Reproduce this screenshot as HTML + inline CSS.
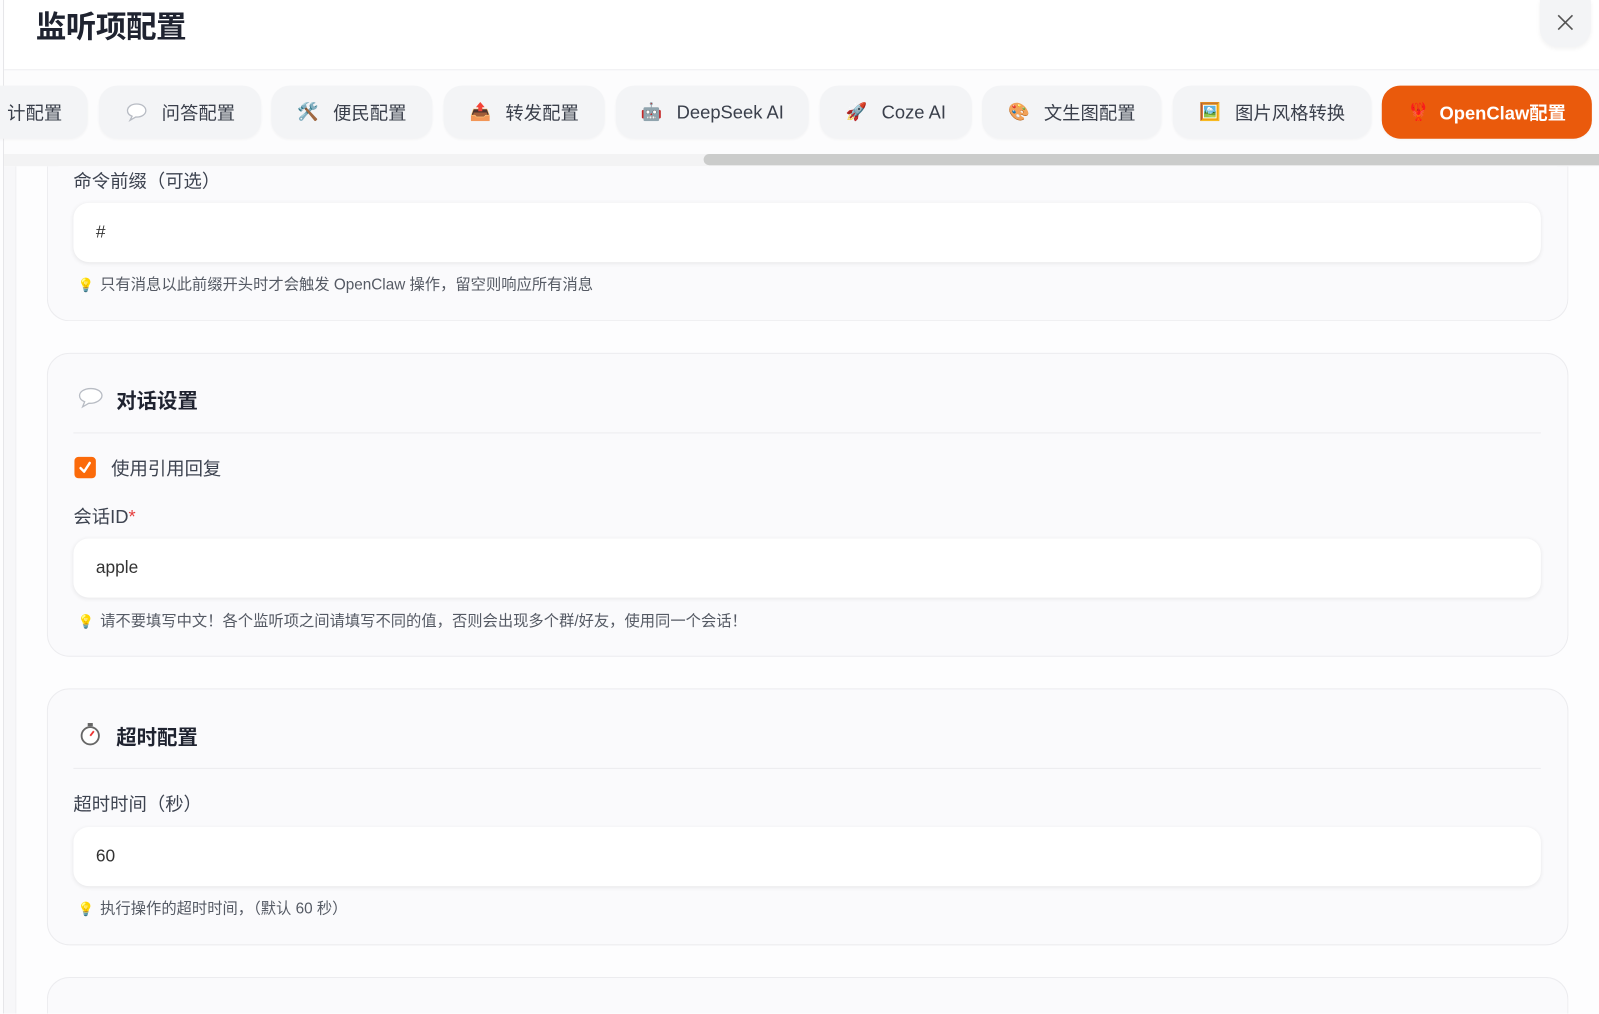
<!DOCTYPE html>
<html style="overflow:hidden"><head><meta charset="utf-8">
<style>
*{box-sizing:border-box;margin:0;padding:0}
html,body{width:1599px;height:1014px;overflow:hidden}
body{background:#fdfdfe;font-family:"Liberation Sans","Noto Sans CJK SC",sans-serif;color:#333;position:relative}
#wrap{position:absolute;left:0;top:0;width:1568px;height:994px;transform:scale(1.01977);transform-origin:0 0;overflow:hidden}
.abs{position:absolute}
.leftline{left:3px;top:0;width:1px;height:994px;background:#e5e5e8}
.leftband{left:4px;top:163px;width:12px;height:831px;background:#f7f7f9;border-right:1px solid #efeff2}
.header{left:4px;top:0;width:1564px;height:69px;background:#fff;border-bottom:1px solid #ececef}
.title{left:35px;top:2px;font-size:30px;font-weight:bold;color:#1f2330;letter-spacing:-0.5px}
.close{left:1510px;top:0;width:50px;height:46px;border-radius:0 0 18px 18px;background:#f3f4f6;box-shadow:0 2px 4px rgba(0,0,0,.05)}
.tabsbg{left:4px;top:69px;width:1564px;height:94px;background:#fcfcfd}
.tab{position:absolute;top:84px;height:52px;border-radius:18px;background:#f3f4f6;font-size:18px;color:#3a3f4b;display:flex;align-items:center;justify-content:center;gap:14px;box-shadow:0 1px 2px rgba(0,0,0,.03)}
.tab .ic{font-size:17px}
.tab.active{background:#ea5a0c;color:#fff;font-weight:bold}
.track{left:4px;top:151px;width:1564px;height:12px;background:#f3f3f4}
.thumb{left:690px;top:151px;width:878px;height:11px;background:#cbcccb;border-radius:6px 0 0 6px}
.card{position:absolute;left:46px;width:1492px;background:#fafafc;border:1px solid #ececef;border-radius:22px}
.lbl{position:absolute;left:72px;font-size:18px;color:#3d4350}
.inp{position:absolute;left:72px;width:1439px;height:58px;background:#fff;border-radius:15px;box-shadow:0 1px 4px rgba(0,0,0,.08);font-size:17px;color:#333;padding-left:22px;line-height:58px}
.hint{position:absolute;left:76px;font-size:15px;color:#555a64}
.hint b{font-weight:normal;font-size:13px;margin-right:6px}
.ctitle{position:absolute;left:114px;font-size:20px;font-weight:bold;color:#1f2330}
.divider{position:absolute;left:72px;width:1439px;height:1px;background:#ececef}
</style></head><body><div id="wrap">
<div class="abs leftline"></div>
<div class="abs leftband"></div>
<div class="abs header"></div>
<div class="abs title">监听项配置</div>
<div class="abs close"><svg width="50" height="46"><path d="M18 15 L32 29 M32 15 L18 29" stroke="#555" stroke-width="1.6" fill="none"/></svg></div>
<div class="abs tabsbg"></div>
<div class="tab" style="left:-70px;width:156px;justify-content:flex-end;padding-right:25px">计配置</div>
<div class="tab" style="left:97px;width:159px"><svg width="22" height="20"><path d="M11 2 C5 2 2 5.5 2 8.5 C2 11 4 13 6.5 14 L4.5 18 L10 14.8 C16 15 20 12 20 8.5 C20 5 16.5 2 11 2 Z" fill="#fff" stroke="#b8bcc4" stroke-width="1.3"/></svg>问答配置</div>
<div class="tab" style="left:266px;width:158px"><span class="ic">🛠️</span>便民配置</div>
<div class="tab" style="left:435px;width:158px"><span class="ic">📤</span>转发配置</div>
<div class="tab" style="left:604px;width:189px"><span class="ic">🤖</span>DeepSeek AI</div>
<div class="tab" style="left:804px;width:149px"><span class="ic">🚀</span>Coze AI</div>
<div class="tab" style="left:963px;width:176px"><span class="ic">🎨</span>文生图配置</div>
<div class="tab" style="left:1150px;width:195px"><span class="ic">🖼️</span>图片风格转换</div>
<div class="tab active" style="left:1355px;width:206px;gap:10px"><span class="ic">🦞</span>OpenClaw配置</div>
<div class="abs track"></div>
<div class="abs thumb"></div>

<div class="card" style="border-top:none;border-radius:0 0 22px 22px;top:163px;height:152px"></div>
<div class="lbl" style="top:164px">命令前缀（可选）</div>
<div class="inp" style="top:199px">#</div>
<div class="hint" style="top:268px"><b>💡</b>只有消息以此前缀开头时才会触发 OpenClaw 操作，留空则响应所有消息</div>

<div class="card" style="top:346px;height:298px"></div>
<div class="abs" style="left:76px;top:379px"><svg width="26" height="22"><path d="M13 2 C6 2 2 5.5 2 9 C2 12 4.5 14 7 15 L5 20 L11 16.5 C18 16.8 24 13 24 9 C24 5 19.5 2 13 2 Z" fill="#fff" stroke="#b8bcc4" stroke-width="1.3"/></svg></div>
<div class="ctitle" style="top:377px">对话设置</div>
<div class="divider" style="top:424px"></div>
<div class="abs" style="left:73px;top:448px;width:21px;height:21px;border-radius:4px;background:#fb6a0a"><svg width="21" height="21"><path d="M6 11 L9.5 14.5 L15 6" stroke="#fff" stroke-width="2.4" fill="none" stroke-linecap="round" stroke-linejoin="round"/></svg></div>
<div class="lbl" style="left:109px;top:446px">使用引用回复</div>
<div class="lbl" style="top:493px">会话ID<span style="color:#e53e3e">*</span></div>
<div class="inp" style="top:528px">apple</div>
<div class="hint" style="top:598px"><b>💡</b>请不要填写中文！各个监听项之间请填写不同的值，否则会出现多个群/好友，使用同一个会话！</div>

<div class="card" style="top:675px;height:252px"></div>
<div class="abs" style="left:77px;top:707px"><svg width="24" height="26"><rect x="9" y="2" width="5" height="3" fill="#666"/><circle cx="11.5" cy="14.5" r="8.5" stroke="#666" stroke-width="1.8" fill="#fff"/><path d="M11.5 14.5 L15 10" stroke="#e33" stroke-width="1.8" fill="none"/></svg></div>
<div class="ctitle" style="top:707px">超时配置</div>
<div class="divider" style="top:753px"></div>
<div class="lbl" style="top:775px">超时时间（秒）</div>
<div class="inp" style="top:811px">60</div>
<div class="hint" style="top:880px"><b>💡</b>执行操作的超时时间，（默认 60 秒）</div>

<div class="card" style="top:958px;height:36px;border-bottom:none;border-radius:22px 22px 0 0"></div>
</div></body></html>
